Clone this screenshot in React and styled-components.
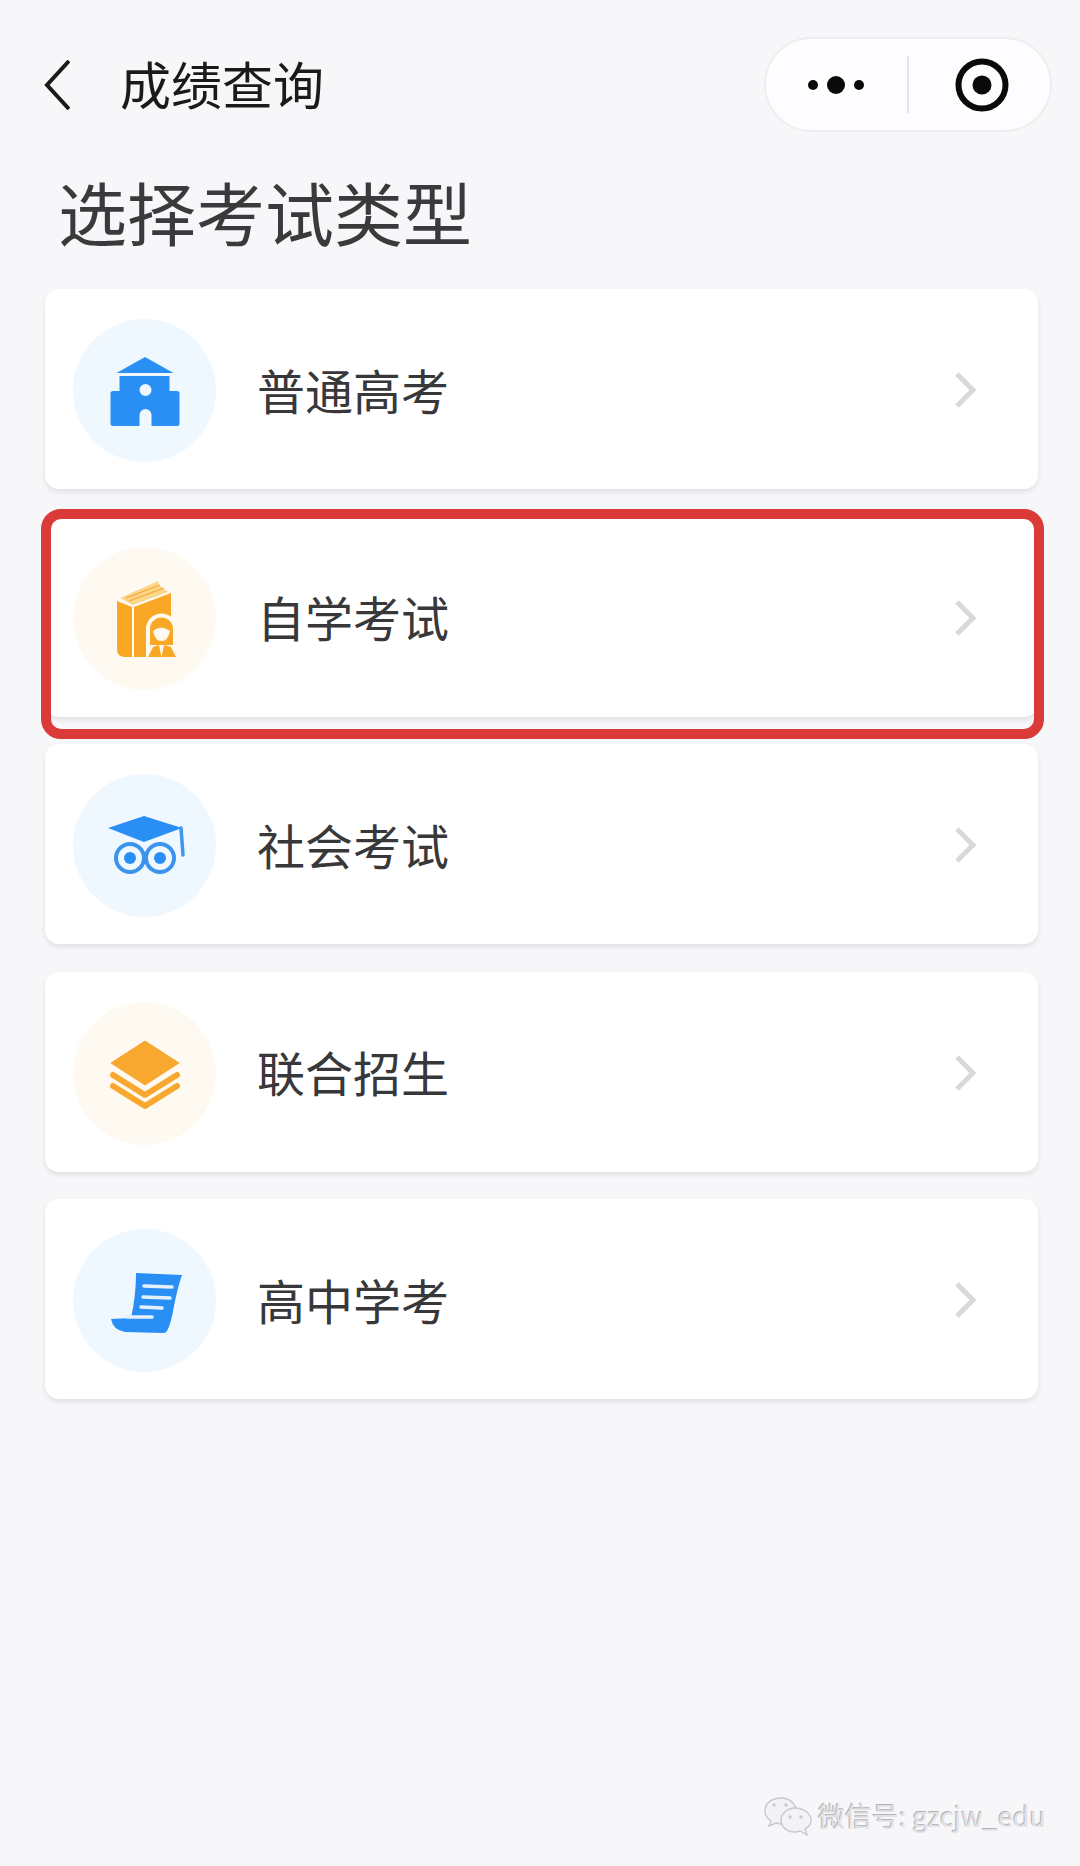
import React from 'react'
import styled, { createGlobalStyle } from 'styled-components'

const GlobalStyle = createGlobalStyle`
  html, body {
    margin: 0;
    padding: 0;
    background: #f7f7f9;
  }
  body {
    font-family: "Noto Sans CJK SC", "Liberation Sans", sans-serif;
  }
`
const Page = styled.div`
  position: relative;
  width: 1080px;
  height: 1866px;
  overflow: hidden;
  background: #f7f7f9;
`
const NavBar = styled.div`
  display: flex;
  align-items: center;
  height: 95px;
  padding: 37px 28px 0 44px;
`
const BackIcon = styled.svg`
  width: 26px;
  height: 50px;
  flex: none;
`
const NavTitle = styled.div`
  margin: -3px 0 0 50px;
  font-size: 51px;
  line-height: 60px;
  color: #1a1a1a;
`
const Capsule = styled.div`
  display: flex;
  align-items: center;
  margin-left: auto;
  width: 288px;
  height: 95px;
  box-sizing: border-box;
  border: 2px solid #eeedef;
  border-radius: 48px;
  background: #fdfcfe;
`
const CapsuleSide = styled.div`
  flex: 1 1 0;
  height: 100%;
  display: flex;
  align-items: center;
  justify-content: center;
`
const CapsuleDivider = styled.div`
  width: 2px;
  height: 57px;
  background: #e4e3e6;
`
const TargetIcon = styled.svg`
  width: 56px;
  height: 56px;
  margin-left: 5px;
`
const Heading = styled.h1`
  margin: 39px 0 38px 58px;
  font-size: 69px;
  line-height: 80px;
  font-weight: 400;
  color: #3a3a3c;
`
const CardList = styled.div`
  display: flex;
  flex-direction: column;
  gap: 27.5px;
  margin: 0 42px 0 45px;
`
const Card = styled.div`
  position: relative;
  display: flex;
  align-items: center;
  height: 200px;
  padding: 0 61px 0 28px;
  background: #fff;
  border-radius: 14px;
  box-shadow: 0 3px 5px rgba(40, 40, 60, 0.1);
`
const IconCircle = styled.div`
  flex: none;
  width: 143px;
  height: 143px;
  margin-top: 3px;
  border-radius: 50%;
  display: flex;
  align-items: center;
  justify-content: center;
  background: ${(p) => (p.$tone === 'orange' ? '#fffaf1' : '#f0f8ff')};
`
const CardLabel = styled.div`
  margin: -1px 0 0 41px;
  font-size: 48px;
  line-height: 60px;
  color: #38383a;
`
const Arrow = styled.svg`
  margin: 2px 0 0 auto;
  width: 24px;
  height: 38px;
  flex: none;
`
const Highlight = styled.div`
  position: absolute;
  top: -8px;
  left: -4px;
  right: -6px;
  bottom: -22px;
  border: 10px solid #da3a38;
  border-radius: 20px;
  pointer-events: none;
`
const Watermark = styled.div`
  position: absolute;
  right: 34px;
  bottom: 30px;
  display: flex;
  align-items: center;
  gap: 5px;
  font-size: 27px;
  line-height: 40px;
  color: #e2e1e4;
  text-shadow: -1px -1px 0 #b4b4b8;
`

const HouseIcon = () => (
  <svg width="90" height="90" viewBox="0 0 90 90">
    <path d="M45 11 L73.5 27 H16.5 Z" fill="#2a8ff5" />
    <path
      fill="#2a8ff5"
      fillRule="evenodd"
      d="M19.5 30 H69.5 V45 H77 Q79.5 45 79.5 47.5 V77.5 Q79.5 80 77 80 H51.5 V69 A6 6 0 0 0 39.5 69 V80 H13 Q10.5 80 10.5 77.5 V47.5 Q10.5 45 13 45 H19.5 Z M45.5 38 A6 6 0 1 0 45.5 50 A6 6 0 1 0 45.5 38 Z"
    />
  </svg>
)

const BookIcon = () => (
  <svg width="90" height="90" viewBox="0 0 90 90">
    <path d="M20 25 L58 8 L59 12 L68 19 L33 32 Z" fill="#fbd68f" />
    <path d="M26 25 L60 12 M29 28 L64 15" stroke="#f8a825" strokeWidth="1.2" />
    <path d="M17 28 L32 34 V84 H25 Q17 84 17 76 Z" fill="#f8a825" />
    <path d="M34 34 L71 20 V84 H34 Z" fill="#f8a825" />
    <path d="M46 84 V56 A15.5 15.5 0 0 1 77 56 V84 Z" fill="#fffaf1" />
    <path d="M50 72 V56 A11.5 11.5 0 0 1 73 56 V72 Z" fill="#f8a825" />
    <path d="M53 58 Q61 51 70 58 Q68 68 61.5 68 Q55 68 53 58 Z" fill="#fffaf1" />
    <path d="M48 84 L53 74 L59 72 L61.5 84 Z M76 84 L71 74 L64 72 L61.5 84 Z" fill="#f8a825" />
  </svg>
)

const OwlIcon = () => (
  <svg width="90" height="90" viewBox="0 0 90 90">
    <path d="M8 27 L44 15 L82 27 L44 41 Z" fill="#2a8ff5" />
    <path d="M81 27 L83 54" stroke="#4097ea" strokeWidth="3.5" strokeLinecap="round" fill="none" />
    <circle cx="30" cy="57" r="14" fill="none" stroke="#3a94ec" strokeWidth="4" />
    <circle cx="60" cy="57" r="14" fill="none" stroke="#3a94ec" strokeWidth="4" />
    <circle cx="30" cy="57" r="6" fill="#2a8ff5" />
    <circle cx="60" cy="57" r="6" fill="#2a8ff5" />
  </svg>
)

const LayersIcon = () => (
  <svg width="90" height="90" viewBox="0 0 90 90">
    <path d="M45 13 L79 35 L45 57 L11 35 Z" fill="#f8a72f" stroke="#f8a72f" strokeLinejoin="round" strokeWidth="1" />
    <path
      d="M13 47 L45 67 L77 47 M13 58 L45 78 L77 58"
      fill="none"
      stroke="#f8a72f"
      strokeWidth="6"
      strokeLinecap="round"
      strokeLinejoin="round"
    />
  </svg>
)

const ScrollIcon = () => (
  <svg width="90" height="90" viewBox="0 0 90 90">
    <path
      d="M36 17 L82 19 Q78 30 74 50 Q71 68 67 75 Q66 77 62 77 L25 76 Q13 74 11 63 L31 62 Q36 40 36 17 Z"
      fill="#2a8ff5"
    />
    <path
      d="M44 30 L72 31 M43 41 L70 42 M41 51 L62 52 M27 61 L52 61"
      stroke="#e4f1fd"
      strokeWidth="3.5"
      strokeLinecap="round"
      fill="none"
    />
  </svg>
)

const WeChatMark = () => (
  <svg width="50" height="40" viewBox="0 0 50 40" fill="#f3f2f5" stroke="#c9c8cd" strokeWidth="1.4">
    <path d="M18 2 C8 2 2 8 2 15 C2 20 5 23 8 25 L6 30 L13 27 Q16 28 19 28 C28 28 33 22 33 15 C33 8 27 2 18 2 Z" />
    <path d="M32 12 C24 12 18 18 18 24 C18 31 24 36 32 36 Q35 36 37 35 L44 39 L42 33 C46 31 48 28 48 24 C48 18 41 12 32 12 Z" />
    <circle cx="11" cy="9" r="1" />
    <circle cx="23" cy="9" r="1" />
    <circle cx="27" cy="21" r="1" />
    <circle cx="38" cy="21" r="1" />
  </svg>
)

const exams = [
  { name: '普通高考', tone: 'blue', Icon: HouseIcon },
  { name: '自学考试', tone: 'orange', Icon: BookIcon, marked: true },
  { name: '社会考试', tone: 'blue', Icon: OwlIcon },
  { name: '联合招生', tone: 'orange', Icon: LayersIcon },
  { name: '高中学考', tone: 'blue', Icon: ScrollIcon },
]

export default function App() {
  return (
    <Page>
      <GlobalStyle />
      <NavBar>
        <BackIcon viewBox="0 0 26 50">
          <path d="M25 1 L3 25 L25 49" fill="none" stroke="#1a1a1a" strokeWidth="4" />
        </BackIcon>
        <NavTitle>成绩查询</NavTitle>
        <Capsule>
          <CapsuleSide>
            <svg width="62" height="20" viewBox="0 0 62 20">
              <circle cx="7" cy="10" r="5" fill="#0a0a0a" />
              <circle cx="30" cy="10" r="9" fill="#0a0a0a" />
              <circle cx="53" cy="10" r="5" fill="#0a0a0a" />
            </svg>
          </CapsuleSide>
          <CapsuleDivider />
          <CapsuleSide>
            <TargetIcon viewBox="0 0 56 56">
              <circle cx="28" cy="28" r="23.5" fill="none" stroke="#0a0a0a" strokeWidth="6" />
              <circle cx="28" cy="28" r="9.5" fill="#0a0a0a" />
            </TargetIcon>
          </CapsuleSide>
        </Capsule>
      </NavBar>
      <Heading>选择考试类型</Heading>
      <CardList>
        {exams.map(({ name, tone, Icon, marked }) => (
          <Card key={name}>
            <IconCircle $tone={tone}>
              <Icon />
            </IconCircle>
            <CardLabel>{name}</CardLabel>
            <Arrow viewBox="0 0 24 38">
              <path d="M4 3 L20 19 L4 35" fill="none" stroke="#d9d9db" strokeWidth="5" />
            </Arrow>
            {marked && <Highlight />}
          </Card>
        ))}
      </CardList>
      <Watermark>
        <WeChatMark />
        <span>微信号: gzcjw_edu</span>
      </Watermark>
    </Page>
  )
}
